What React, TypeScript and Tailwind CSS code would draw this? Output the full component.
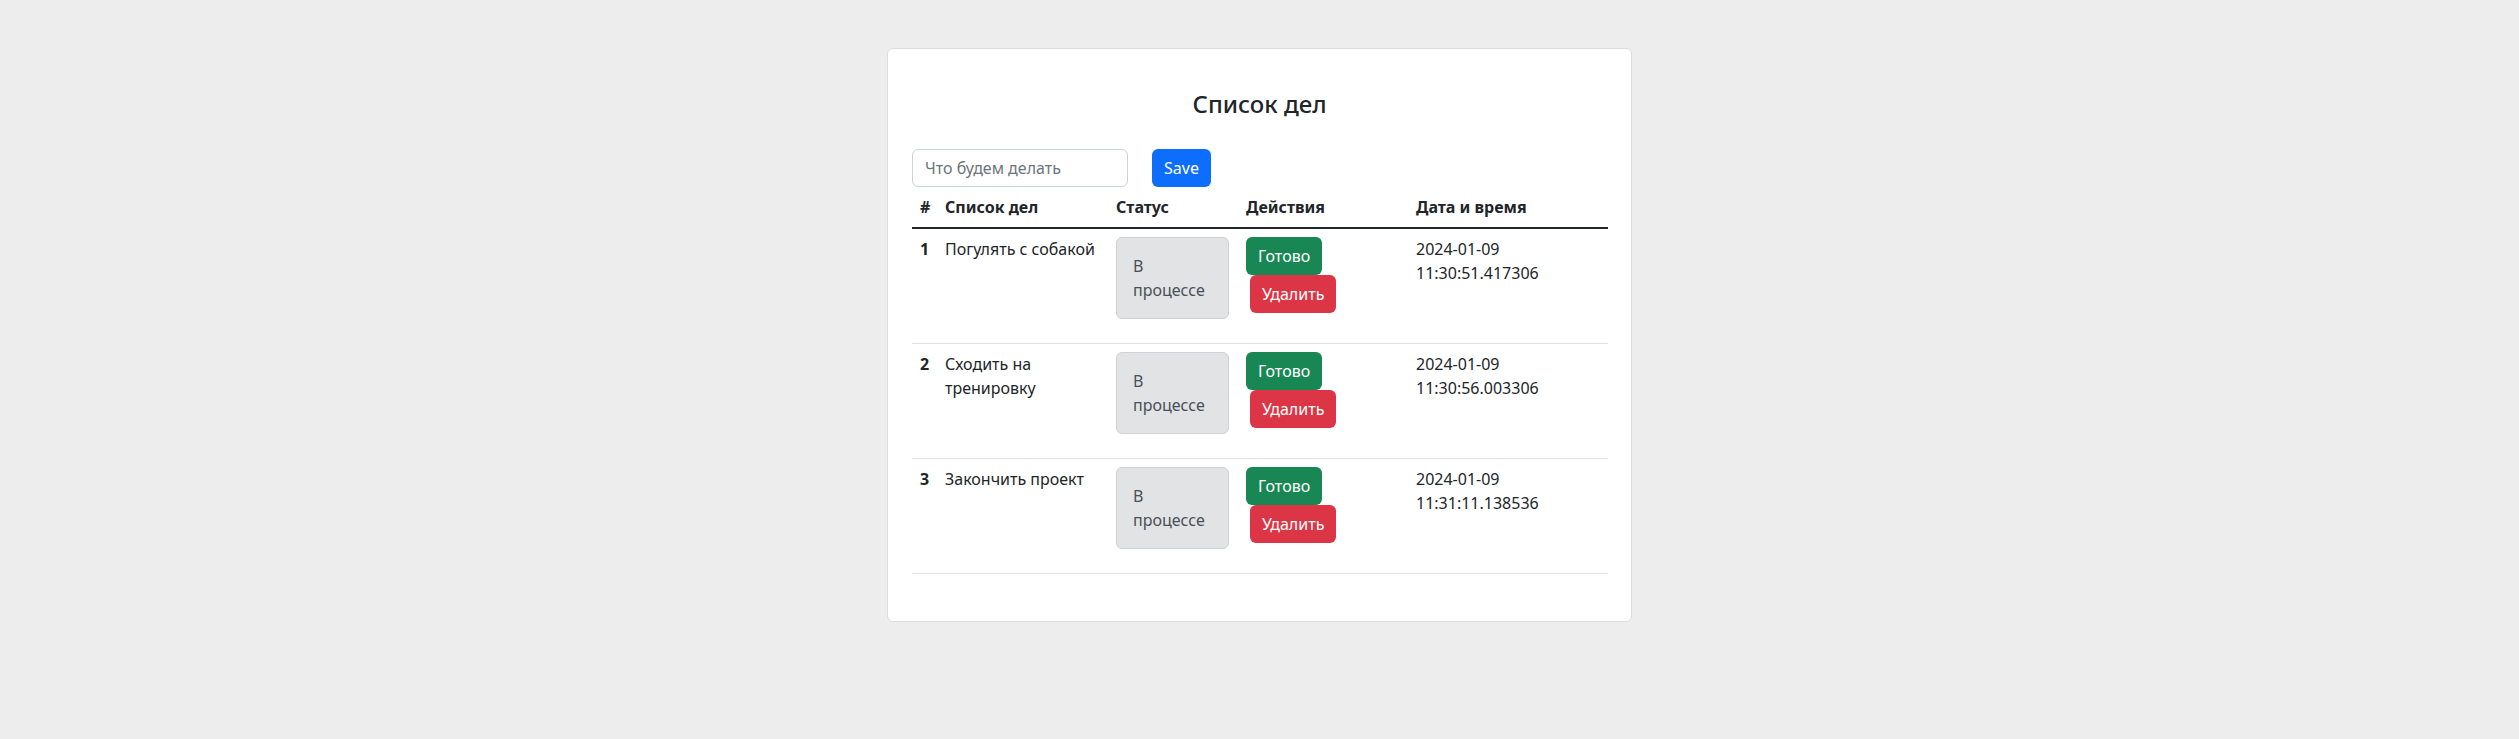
const todos = [
  { id: 1, title: "Погулять с собакой", date: "2024-01-09", time: "11:30:51.417306" },
  { id: 2, title: "Сходить на тренировку", date: "2024-01-09", time: "11:30:56.003306" },
  { id: 3, title: "Закончить проект", date: "2024-01-09", time: "11:31:11.138536" },
];

export default function App() {
  return (
    <div
      className="min-h-[739px] bg-[#ededed] pt-12 text-[#212529] text-base leading-6"
      style={{ fontFamily: '"Noto Sans", "Open Sans", sans-serif' }}
    >
      <div className="mx-auto w-[745px] rounded-md border border-[#dcdcdc] bg-white px-6 pt-[40px] pb-[47px]">
        <h4 className="mb-[31px] text-center text-2xl font-medium leading-[29px]">Список дел</h4>

        <div className="flex items-center gap-6">
          <input
            type="text"
            placeholder="Что будем делать"
            className="h-[38px] w-[216px] rounded-md border border-[#ced4da] px-3 text-base text-[#212529] placeholder:text-[#6c757d] outline-none"
          />
          <button className="h-[38px] rounded-md bg-[#0d6efd] px-3 text-base text-white">Save</button>
        </div>

        <table className="w-[696px] table-fixed border-collapse text-left">
          <colgroup>
            <col className="w-[25px]" />
            <col className="w-[171px]" />
            <col className="w-[130px]" />
            <col className="w-[170px]" />
            <col className="w-[200px]" />
          </colgroup>
          <thead>
            <tr className="border-b-2 border-[#212529]">
              <th className="px-2 py-2 font-bold">#</th>
              <th className="px-2 py-2 font-bold">Список дел</th>
              <th className="px-2 py-2 font-bold">Статус</th>
              <th className="px-2 py-2 font-bold">Действия</th>
              <th className="px-2 py-2 font-bold">Дата и время</th>
            </tr>
          </thead>
          <tbody>
            {todos.map((t) => (
              <tr key={t.id} className="border-b border-[#dee2e6] align-top">
                <th className="px-2 py-2 font-bold">{t.id}</th>
                <td className="px-2 py-2">{t.title}</td>
                <td className="px-2 py-2">
                  <div className="mb-4 flex h-[82px] w-[113px] items-center rounded-md border border-[#cfd1d4] bg-[#e2e3e5] px-4 text-[#495057]">
                    В процессе
                  </div>
                </td>
                <td className="px-2 py-2">
                  <div className="flex flex-col items-start">
                    <button className="h-[38px] rounded-md bg-[#198754] px-3 text-base text-white">Готово</button>
                    <button className="ml-1 h-[38px] rounded-md bg-[#dc3545] px-3 text-base text-white">Удалить</button>
                  </div>
                </td>
                <td className="px-2 py-2">
                  <div>{t.date}</div>
                  <div>{t.time}</div>
                </td>
              </tr>
            ))}
          </tbody>
        </table>
      </div>
    </div>
  );
}
